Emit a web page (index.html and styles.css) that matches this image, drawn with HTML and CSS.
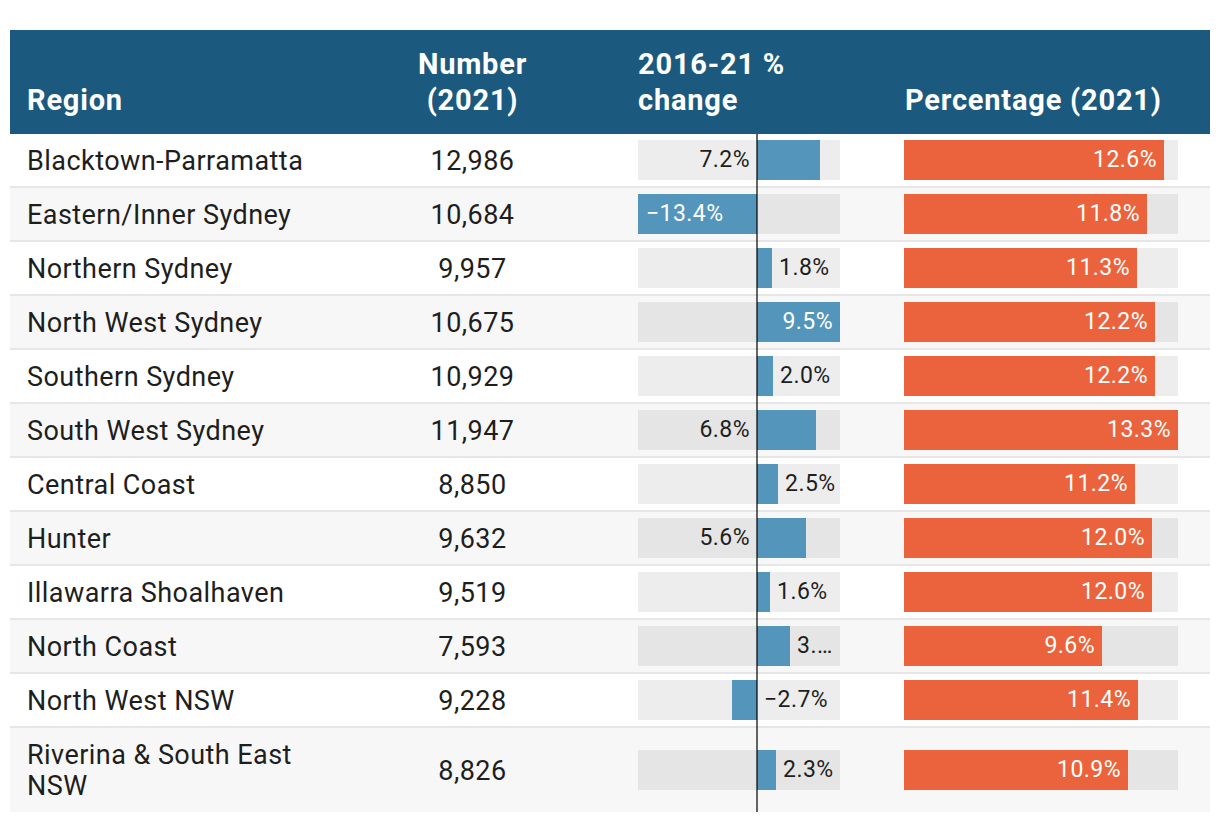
FILE: index.html
```html
<!DOCTYPE html>
<html lang="en">
<head>
<meta charset="utf-8">
<title>Regions table</title>
<link rel="stylesheet" href="styles.css">
</head>
<body>
<div class="table">
  <div class="head">
    <div class="c-region">Region</div>
    <div class="c-num">Number<br>(2021)</div>
    <div class="c-chg">2016-21 %<br>change</div>
    <div class="c-pct">Percentage (2021)</div>
  </div>
  <div class="body">
    <div class="row">
      <div class="c-region">Blacktown-Parramatta</div>
      <div class="c-num">12,986</div>
      <div class="c-chg"><div class="track"><div class="half neg"><span class="lbl out-l">7.2%</span></div><div class="half pos"><div class="bar" style="width:63px"></div></div></div></div>
      <div class="c-pct"><div class="ptrack"><div class="pbar" style="width:260px"><span class="lbl">12.6%</span></div></div></div>
    </div>
    <div class="row alt">
      <div class="c-region">Eastern/Inner Sydney</div>
      <div class="c-num">10,684</div>
      <div class="c-chg"><div class="track"><div class="half neg"><div class="bar in-neg" style="width:119px"><span class="lbl">−13.4%</span></div></div><div class="half pos"></div></div></div>
      <div class="c-pct"><div class="ptrack"><div class="pbar" style="width:243px"><span class="lbl">11.8%</span></div></div></div>
    </div>
    <div class="row">
      <div class="c-region">Northern Sydney</div>
      <div class="c-num">9,957</div>
      <div class="c-chg"><div class="track"><div class="half neg"></div><div class="half pos"><div class="bar" style="width:15px"></div><span class="lbl out-r">1.8%</span></div></div></div>
      <div class="c-pct"><div class="ptrack"><div class="pbar" style="width:233px"><span class="lbl">11.3%</span></div></div></div>
    </div>
    <div class="row alt">
      <div class="c-region">North West Sydney</div>
      <div class="c-num">10,675</div>
      <div class="c-chg"><div class="track"><div class="half neg"></div><div class="half pos"><div class="bar in-pos" style="width:83px"><span class="lbl">9.5%</span></div></div></div></div>
      <div class="c-pct"><div class="ptrack"><div class="pbar" style="width:251px"><span class="lbl">12.2%</span></div></div></div>
    </div>
    <div class="row">
      <div class="c-region">Southern Sydney</div>
      <div class="c-num">10,929</div>
      <div class="c-chg"><div class="track"><div class="half neg"></div><div class="half pos"><div class="bar" style="width:16px"></div><span class="lbl out-r">2.0%</span></div></div></div>
      <div class="c-pct"><div class="ptrack"><div class="pbar" style="width:251px"><span class="lbl">12.2%</span></div></div></div>
    </div>
    <div class="row alt">
      <div class="c-region">South West Sydney</div>
      <div class="c-num">11,947</div>
      <div class="c-chg"><div class="track"><div class="half neg"><span class="lbl out-l">6.8%</span></div><div class="half pos"><div class="bar" style="width:59px"></div></div></div></div>
      <div class="c-pct"><div class="ptrack"><div class="pbar" style="width:274px"><span class="lbl">13.3%</span></div></div></div>
    </div>
    <div class="row">
      <div class="c-region">Central Coast</div>
      <div class="c-num">8,850</div>
      <div class="c-chg"><div class="track"><div class="half neg"></div><div class="half pos"><div class="bar" style="width:21px"></div><span class="lbl out-r">2.5%</span></div></div></div>
      <div class="c-pct"><div class="ptrack"><div class="pbar" style="width:231px"><span class="lbl">11.2%</span></div></div></div>
    </div>
    <div class="row alt">
      <div class="c-region">Hunter</div>
      <div class="c-num">9,632</div>
      <div class="c-chg"><div class="track"><div class="half neg"><span class="lbl out-l">5.6%</span></div><div class="half pos"><div class="bar" style="width:49px"></div></div></div></div>
      <div class="c-pct"><div class="ptrack"><div class="pbar" style="width:248px"><span class="lbl">12.0%</span></div></div></div>
    </div>
    <div class="row">
      <div class="c-region">Illawarra Shoalhaven</div>
      <div class="c-num">9,519</div>
      <div class="c-chg"><div class="track"><div class="half neg"></div><div class="half pos"><div class="bar" style="width:13px"></div><span class="lbl out-r">1.6%</span></div></div></div>
      <div class="c-pct"><div class="ptrack"><div class="pbar" style="width:248px"><span class="lbl">12.0%</span></div></div></div>
    </div>
    <div class="row alt">
      <div class="c-region">North Coast</div>
      <div class="c-num">7,593</div>
      <div class="c-chg"><div class="track"><div class="half neg"></div><div class="half pos"><div class="bar" style="width:33px"></div><span class="lbl out-r">3.…</span></div></div></div>
      <div class="c-pct"><div class="ptrack"><div class="pbar" style="width:198px"><span class="lbl">9.6%</span></div></div></div>
    </div>
    <div class="row">
      <div class="c-region">North West NSW</div>
      <div class="c-num">9,228</div>
      <div class="c-chg"><div class="track"><div class="half neg"><div class="bar" style="width:25px"></div></div><div class="half pos"><span class="lbl out-r">−2.7%</span></div></div></div>
      <div class="c-pct"><div class="ptrack"><div class="pbar" style="width:234px"><span class="lbl">11.4%</span></div></div></div>
    </div>
    <div class="row alt tall">
      <div class="c-region">Riverina &amp; South East NSW</div>
      <div class="c-num">8,826</div>
      <div class="c-chg"><div class="track"><div class="half neg"></div><div class="half pos"><div class="bar" style="width:19px"></div><span class="lbl out-r">2.3%</span></div></div></div>
      <div class="c-pct"><div class="ptrack"><div class="pbar" style="width:224px"><span class="lbl">10.9%</span></div></div></div>
    </div>
    <div class="zero"></div>
  </div>
</div>
</body>
</html>
```

FILE: styles.css
```css
* {
  box-sizing: border-box;
}

body {
  margin: 0;
  background: #ffffff;
  font-family: Roboto, "Noto Sans", "Liberation Sans", sans-serif;
  color: #1e1e1e;
}

.table {
  margin: 30px 10px 0;
  width: 1200px;
}

.head,
.row {
  display: grid;
  grid-template-columns: 380px 165px 333px 322px;
}

.head {
  height: 104px;
  background: #1b5a7e;
  color: #ffffff;
  font-weight: 700;
  font-size: 29px;
  letter-spacing: 0.8px;
  line-height: 36px;
  align-items: end;
  padding-bottom: 16px;
}

.head .c-region {
  padding-left: 17px;
}

.head .c-num {
  text-align: center;
}

.head .c-chg {
  padding-left: 83px;
}

.head .c-pct {
  padding-left: 17px;
}

.body {
  position: relative;
}

.row {
  height: 54px;
  border-bottom: 2px solid #e6e6e6;
  align-items: center;
  font-size: 27px;
  letter-spacing: 0.45px;
  line-height: 31px;
  background: #ffffff;
}

.row.alt {
  background: #f7f7f7;
}

.row.tall {
  height: 84px;
  border-bottom: none;
}

.row .c-region {
  padding-left: 17px;
  padding-right: 63px;
  padding-top: 2px;
}

.row .c-num {
  text-align: center;
  padding-top: 2px;
}

.row .c-chg {
  padding-left: 83px;
}

.row .c-pct {
  padding-left: 16px;
}

.track {
  display: flex;
  width: 202px;
  height: 40px;
  background: rgba(0, 0, 0, 0.07);
}

.half {
  display: flex;
  align-items: stretch;
  height: 100%;
  flex-shrink: 0;
  overflow: hidden;
}

.half.neg {
  width: 119px;
  justify-content: flex-end;
}

.half.pos {
  width: 83px;
  justify-content: flex-start;
}

.bar {
  flex-shrink: 0;
  height: 100%;
  background: #5495bc;
  display: flex;
  align-items: center;
}

.bar.in-pos {
  justify-content: flex-end;
  padding-right: 7px;
}

.bar.in-neg {
  justify-content: flex-start;
  padding-left: 8px;
}

.lbl {
  font-size: 23px;
  letter-spacing: 0.45px;
  line-height: 40px;
  white-space: nowrap;
  color: #1e1e1e;
}

.bar .lbl,
.pbar .lbl {
  color: #ffffff;
}

.lbl.out-l {
  padding-right: 7px;
}

.lbl.out-r {
  padding-left: 7px;
}

.ptrack {
  width: 274px;
  height: 40px;
  background: rgba(0, 0, 0, 0.07);
}

.pbar {
  height: 100%;
  background: #eb633c;
  display: flex;
  align-items: center;
  justify-content: flex-end;
  padding-right: 7px;
}

.zero {
  position: absolute;
  left: 746px;
  top: 0;
  bottom: 0;
  width: 2px;
  background: rgba(0, 0, 0, 0.6);
}
```
